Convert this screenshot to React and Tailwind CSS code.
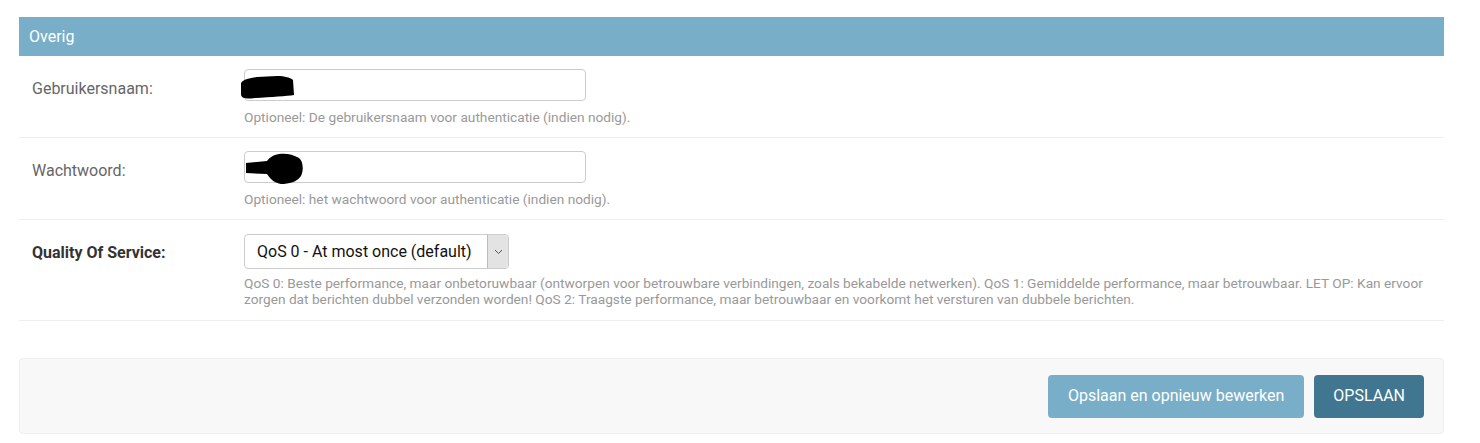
import React from 'react';

const Scribble = ({ variant }) =>
    variant === 'user' ? (
        <svg className="absolute left-[-4px] top-[5px]" width="56" height="26" viewBox="0 0 56 26">
            <path d="M0 8 C2 4 10 3 16 2 L36 1 C44 1 50 3 52 5 L53 20 C46 21 30 22 14 23 C6 24 1 24 0 20 Z" fill="#000" />
        </svg>
    ) : (
        <svg className="absolute left-[0px] top-[0px]" width="62" height="34" viewBox="0 0 62 34">
            <path d="M1 11 L22 9 C24 6 28 3 34 2 C40 1 48 2 54 6 C58 9 59 18 56 24 C52 30 44 32 36 32 C30 31 26 28 22 22 L1 21 Z" fill="#000" />
        </svg>
    );

const Row = ({ label, bold, children, help, top = 'pt-[13px]', bottom = 'pb-[12px]', labelTop = 'pt-[8px]', helpGap = 'mt-[8px]' }) => (
    <div className={`flex border-b border-[#eee] px-[13px] ${top} ${bottom}`}>
        <div className={`w-[212px] shrink-0 text-[16px] leading-[24px] ${labelTop} ${bold ? 'font-bold text-[#333]' : 'text-[#666]'}`}>
            {label}
        </div>
        <div className="flex-1">
            {children}
            <div className={`${helpGap} text-[13.7px] leading-[16px] text-[#999]`}>{help}</div>
        </div>
    </div>
);

export default function App() {
    return (
        <div className="min-h-screen bg-white pt-[17px] pl-[19px] pr-[36px]" style={{ fontFamily: 'Roboto, "Liberation Sans", sans-serif' }}>
            {/* Fieldset */}
            <div>
                <h2 className="flex h-[39px] items-center bg-[#79aec8] px-[10px] text-[16px] text-white">Overig</h2>

                <Row label="Gebruikersnaam:" help="Optioneel: De gebruikersnaam voor authenticatie (indien nodig).">
                    <div className="relative h-[32px] w-[342px] rounded border border-[#ccc] bg-white">
                        <Scribble variant="user" />
                    </div>
                </Row>

                <Row label="Wachtwoord:" help="Optioneel: het wachtwoord voor authenticatie (indien nodig).">
                    <div className="relative h-[32px] w-[342px] rounded border border-[#ccc] bg-white">
                        <Scribble variant="pass" />
                    </div>
                </Row>

                <Row
                    label="Quality Of Service:"
                    bold
                    top="pt-[14px]"
                    bottom="pb-[13px]"
                    labelTop="pt-[7px]"
                    helpGap="mt-[6px]"
                    help="QoS 0: Beste performance, maar onbetoruwbaar (ontworpen voor betrouwbare verbindingen, zoals bekabelde netwerken). QoS 1: Gemiddelde performance, maar betrouwbaar. LET OP: Kan ervoor zorgen dat berichten dubbel verzonden worden! QoS 2: Traagste performance, maar betrouwbaar en voorkomt het versturen van dubbele berichten."
                >
                    <div className="flex h-[35px] w-[265px] items-stretch rounded border border-[#ccc] bg-white">
                        <div className="flex flex-1 items-center pl-[12px] text-[16px] text-[#111]">QoS 0 - At most once (default)</div>
                        <div className="flex w-[21px] items-center justify-center rounded-r-[3px] border-l border-[#bbb] bg-[#e3e3e3]">
                            <svg width="9" height="6" viewBox="0 0 9 6">
                                <path d="M1 1 L4.5 4.5 L8 1" fill="none" stroke="#555" strokeWidth="1" />
                            </svg>
                        </div>
                    </div>
                </Row>
            </div>

            {/* Submit row */}
            <div className="mt-[37px] flex h-[76px] items-center justify-end gap-[10px] rounded border border-[#eee] bg-[#f8f8f8] px-[19px]">
                <button className="h-[43px] rounded bg-[#79aec8] px-[20px] text-[16px] text-white">Opslaan en opnieuw bewerken</button>
                <button className="h-[43px] rounded bg-[#417690] px-[19px] text-[16px] text-white">OPSLAAN</button>
            </div>
        </div>
    );
}
